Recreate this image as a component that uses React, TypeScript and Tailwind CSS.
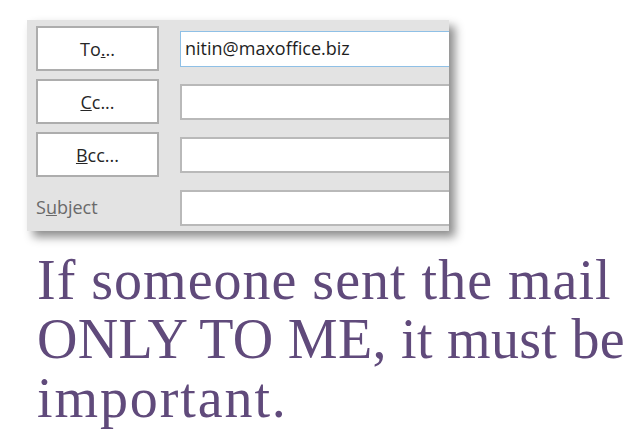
import React from "react";

const uiFont = { fontFamily: '"Open Sans", "Noto Sans", sans-serif' };

const RecipientButton: React.FC<{ children: React.ReactNode }> = ({ children }) => (
  <button
    type="button"
    className="h-[45px] w-[123px] border-2 border-[#adadad] bg-white text-[18px] text-[#262626] leading-none"
    style={uiFont}
  >
    {children}
  </button>
);

const Field: React.FC<{ value?: string; active?: boolean }> = ({ value, active }) => (
  <div
    className={`flex h-[36px] w-[300px] items-center bg-white px-[4px] text-[18px] text-[#1e1e1e] ${
      active ? "border border-[#8fc0e6]" : "border-2 border-[#b9b9b9]"
    }`}
    style={uiFont}
  >
    {value}
  </div>
);

export default function App() {
  return (
    <div className="min-h-[442px] w-[639px] bg-white pl-[27px] pt-[20px]">
      {/* Outlook compose header */}
      <div className="w-[422px] overflow-hidden bg-[#e3e3e3] pl-[9px] pt-[6px] pb-[1px] shadow-[6px_6px_9px_rgba(0,0,0,0.45)]">
        <div className="grid grid-cols-[123px_1fr] gap-x-[21px] gap-y-[8px]">
          <RecipientButton>
            To<span className="underline">.</span>..
          </RecipientButton>
          <div className="flex items-center">
            <Field value="nitin@maxoffice.biz" active />
          </div>

          <RecipientButton>
            <span className="underline">C</span>c...
          </RecipientButton>
          <div className="flex items-center">
            <Field />
          </div>

          <RecipientButton>
            <span className="underline">B</span>cc...
          </RecipientButton>
          <div className="flex items-center">
            <Field />
          </div>

          <div className="flex h-[45px] items-center text-[18px] text-[#6a6a6a]" style={uiFont}>
            S<span className="underline">u</span>bject
          </div>
          <div className="flex items-center">
            <Field />
          </div>
        </div>
      </div>

      {/* Slide text */}
      <p
        className="mt-[20px] ml-[10px] flex flex-col whitespace-nowrap text-[56px] leading-[59px] text-[#604a7b]"
        style={{ fontFamily: '"Liberation Serif", "DejaVu Serif", serif' }}
      >
        <span className="tracking-[1px]">If someone sent the mail</span>
        <span className="tracking-[0.3px]">ONLY TO ME, it must be</span>
        <span className="tracking-[1.9px]">important.</span>
      </p>
    </div>
  );
}
